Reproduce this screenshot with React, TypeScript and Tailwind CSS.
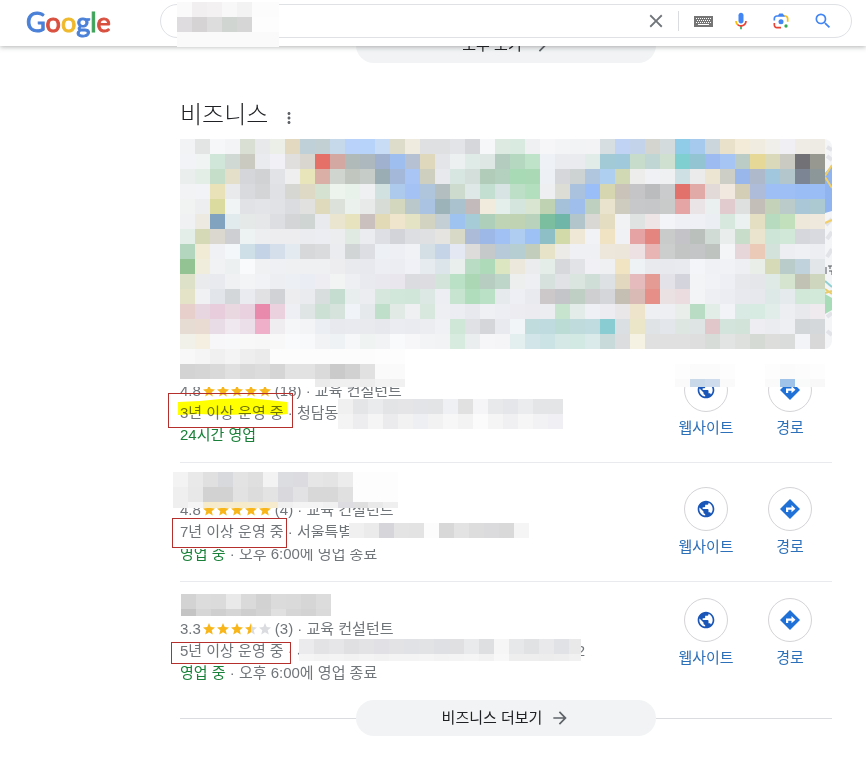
import clsx from "clsx";
import type { ReactNode } from "react";
import { MdArrowForward, MdClose, MdMoreVert, MdPublic, MdSearch } from "react-icons/md";

const CELL = 15;

// one string per row, one hex colour per cell
const mapRows = [
  "f1f3f5 e3e5e5 f5f7f9 f2f4f6 d9dfd3 e7e9eb eceee8 e2d9c0 bfd0d8 c2d0d3 c5d9ea b8d2f9 b8d3f9 c9dcf6 dddccb f0ebdf dfe0e2 dfe0e2 e3e4e8 d6d7da f6f7f9 dceae2 d9ebe0 eef0f2 f6f6f8 f3f4f6 f2f3f5 f3f3f5 d6dee1 c1d3f4 c2d3ea d3d5ce d4dbdd 90cbe8 a5caee cbd6dc e9e1ca f3ead8 f0ede0 f0efea efeff4 eeece5 edebe3",
  "f1f3f6 f0f5f4 d0e6d8 d1d9d5 cbcac1 e9ebee f0f0f6 e0dfdd d8d6cf e47068 d3a8a3 b0bab9 adb8be 9fb1ce 9fbef0 b6c2d3 dfd8bd e4e5e9 ecf0f1 dfebe6 dee7e4 b4ccbf b5d8c1 bfe3c8 eef2f6 eaebef e9ebef e1ece8 a2c9d6 a1c9dc c8dccc bfd6d5 cfdfd0 7fcfd1 92c5d1 9dbbf0 a6c5f4 bbccc6 e6d998 dadabb cac9c2 717176 979890",
  "eaeeed e3eee6 c5dec9 e3dfc8 d4d6d9 d0d2d4 e2e3e7 efeff0 e9e5ba dab0a6 d0d6cf c1c6be c6ccc8 9aadb5 a4b9da a8c5f5 cfcfbf e8e9ec d8e6e2 d4dedb b1ccb9 b4d1c0 a9dab6 a9dab5 edf1f6 d6d7da cdd3d3 b0c6df afcff1 d1d8b4 ededeb f0f1f4 eff0f2 cfe0e4 ebebec ebe5d1 cdcec6 9ab7eb aebacb a1c7de b3c6cb 7c8594 8c9799",
  "f2f3f4 f1f3f6 e9e1b7 e8eaec d8dade d3d5d7 e0e1e5 d6d6d3 ddd9c4 d5e2d2 edf3ed e8f1ea eff0f2 d0e1df adcaec a4c2f3 aec5db b3bec1 cddbce dee8e6 c3dfd1 d8e4e4 bddfc8 b3dfbf eeeff1 dcddd4 aac2dd 9abff8 d6d6b0 c9c3b9 c5c4c6 bbbcbd cacbcc e2716b e2aaa7 e2dad8 f1e9df d5ceb6 aebcda 9dbff6 9dbff6 9bbdf6 9bbdf6",
  "f0f3f1 eceef0 dcdb9f f1f4f5 e0e2e5 e3e4e7 e1e2e5 dbdce0 e1e1df dedabb dce1da ebf2ed e8eae9 d8dcd7 d3d7bd bac8cc abc3e3 9cb3ba a9c2cd c3babb f1ebdd e4eeeb d4e5de d9e4d1 bfd3b2 a5c1da a0beec bed0bf e9e3ce cecbbf c7c8c9 c6c7c8 c9caca e5a5a4 ebe4e7 eaefef e1cbce dedfdf c3beb8 c3d2b9 bacbca aac7d7 acc8d0",
  "eff1f3 edebe1 82a3bf e1ebee e5eae9 e6e7e9 dcdee1 d3d5d7 ced5d3 e8eaed eae5cf e7e3bf cac0be e2dab7 efe5cd e4e4c5 d2d3c1 c4cfd5 9fc3f0 a6cdd7 aecfb9 bed4b5 c0d4b4 b8d2bb 7abd9f 6fb6a8 b2c5ca d9d8d5 e5ddc1 f1f2f4 dfe4e2 ede5e6 f3f4f8 eff0f5 eff0f5 ebeef3 d7e8df ebf1f1 e4dec2 b6dbbe c3e0bd ede8da efe9dd",
  "e4eee8 d6d9b5 dbd8d0 cecfd2 edf2f3 eceef0 ededef ededef eaecf0 ebedf2 ebedef e0eae3 eaecf0 dddfe5 d3d4da dddee1 dfe0e2 e5e4e0 d9d9c8 abbbd8 9db8e7 a1c1f4 afcdf0 9dc0f5 8ebfc7 d3daa9 f0e8d6 f0f2f6 efe3c4 f0f1f4 e5a3a4 e58580 c9cbcb c3c3c8 bac1bc d0dbd5 e9eeed c9ddcb eae3cd cce5d7 d1e8d8 d5d7dc d9dadf",
  "b3d7be f1ebd5 eff1f4 f4f7f9 cfdfe8 c4d3e6 d5dfec e3eaf0 d6d8da d9dbdd ebecef d1d5d6 dcdee3 edf0f5 eeeff5 f0f2f6 d4dfe5 c5d5e7 e4e8f2 dedcdb c5c9ca b7cad9 b6ced2 c3cdbb e6e3c8 edebe8 eff0f4 eef0f4 ede7db ebe5da ede1e4 e8b5b4 cccdcd c3c5c4 c4c5c6 bec3c0 f4f5f7 e7d6d9 ebcab7 d3e2da eceef1 eef0f4 eceef1",
  "93c293 f0eddc f0f2f4 edf0f1 f8fafc eff1f3 eff0f3 eff0f1 eff0f2 eff0f1 ededf0 e8eaee e7e9ee eceef4 ecedf3 f0f1f6 e6ebef dbe5ea e8efec b9dcc5 afdab9 dce6c1 ece8dc ebeced e5ede8 d7d8dc e2e3e6 f0f0f5 eff0f2 f1e4c2 eff2f5 e8eaed e7e9ee e9eaef f3f5f8 f0f1f5 f0f2f5 edeff2 e9eee9 d6dab7 baccca c0d2dc e3e6e9",
  "dce1c7 eaebed e8eaef eff1f3 f2f4f6 f0f2f5 eceef2 eceff4 eaeef4 eeedf2 f2f4f4 eeeff2 e9eaef e9e8ee e9e7ed dadcdf dddde1 d3e5da bae0c5 abd7b5 b7cdc1 bed6c9 edeeee edeff2 d6e0dc e0e2e5 dae5df cfded6 dde1e3 e2d8bf e5bbbd e49b94 e2e2e8 d3d4dc f2f4f6 f0f2f5 edeff4 e6e8ec e5e6ea dfe9e5 d5e4ce c1c2b4 cfd6be",
  "e4e2c7 eff1f3 e2e5ea d4d7d9 e9ebf1 e1e0e3 d0d2d5 ededf0 e9ebee d8dedd c5dcd0 e8edee ecedf0 d6e7de d0e7d9 d0e6d9 dce8e3 eceef4 c7e4d1 b0ddbc bae0c6 e7eaec edeff5 e9eaf0 ccc7c9 c4c5c8 bfcfc4 cfcfd1 d5d6da c4beb3 dabab5 e68e88 eae1e3 ebdcdf f2f4f6 edeff3 ebedf2 e7e9ee e6e8ed dde9e6 e5eaed d1e7d8 d2e8d8",
  "e7d0cb e7d5e0 e8cedc ead8e1 ead1df e98aad ebd0de edeff4 dfe4e5 cde0d4 d6e3dc f0f3f7 e6e9ec c0dfcb e2eae6 eff0f2 d9e8df eeeff2 ecedf2 e8e9ef eff0f4 edeef3 ededf1 ececf0 ebedf1 c7e4cf e4ece9 eef0f6 ececf1 e9e7e8 eee4cc eeeff2 eeeff2 e9eeeb b9dcc5 e3ede7 f1f3f6 d9e9e4 d8ebe3 e1ede8 eceef1 e8e9ed efeaee",
  "e6dcd3 e9dad2 e8dde7 efe9ef ebdfe9 efafc8 f0edf0 f5f6f8 f3f4f6 ebeef2 e8e9ee e9eaf0 e8eaee e6e8ed eaecf1 e9ebf0 ebedf1 f0f1f4 cee7d7 dfe1e4 d5d6d9 e8eaef f2f5f7 c0dcdc c0dbdf badcd4 c0dbdc c1dce0 89cdd2 d9dfe2 ece6c8 dfe3e5 e3e6ea dde6e1 dee4e3 e1c7ca d3e4dc d2e4da ededf2 ebecef edeff2 d3d6d9 d5d8da",
  "f1f1ea f4efe1 f7f7f9 f7f8fa f8f8f9 f7f7f8 f8f8f8 f9fafc f8f9fb f1f3f5 eff2f4 f6f7f9 eff4f3 f2f3f5 f9fafc f7f7f9 f3f4f6 f2f3f5 d7ecdf ebeeee f6f6f8 f5f5f8 e3efef d2e6e9 cce3e5 d5e8e6 d2e8e3 dae9ea c8dad9 dcddde f5f2e4 e0e0e0 e0e0e0 e0e0e0 dddedd d8dcd9 e2e3e3 dde0dd d5dad4 dddedc dadbdb f3f4f8 d8d8d8",
];

const queryMosaic = [
  "fafafa f1eff0 f3f1f2 f8f8f8 f3f3f3 fcfcfc fcfcfc",
  "dedcde d6d3d5 dddddd d0d5d2 d6d6d6 fdfdfd fdfdfd",
  "fafafa fafafa fafafa fafafa fafafa fafafa fafafa",
];

type MosaicProps = { rows: string[]; className: string };

const Cells = ({ rows }: { rows: string[] }) => (
  <>
    {rows.map((row, y) =>
      row
        .split(" ")
        .map((color, x) => (
          <rect key={`${x}-${y}`} x={x * CELL} y={y * CELL} width={CELL} height={CELL} fill={`#${color}`} />
        ))
    )}
  </>
);

const Mosaic = ({ rows, className }: MosaicProps) => (
  <svg aria-hidden="true" shapeRendering="crispEdges" className={clsx("pointer-events-none absolute", className)}>
    <Cells rows={rows} />
  </svg>
);

const MapPreview = () => (
  <svg role="img" aria-label="지도" viewBox="0 0 652 210" className="block w-full rounded-r-lg" shapeRendering="crispEdges">
    <rect width="652" height="210" fill="#f4f5f7" />
    <g shapeRendering="auto" fill="none">
      <path
        d="M647 8l5 3M647 17l5 4M646 86l6-6M647 100l5-7M647 118l5-8M647 178l5-4M647 192l5 4"
        stroke="#e1e3e8"
        strokeWidth="4"
      />
      <path d="M645 34l7-8v46l-7 2z" fill="#8fb4f0" />
      <path d="M645 37l7-11M645 38l7 11M645 84l7-3" stroke="#f3cf63" strokeWidth="2" />
      <path d="M645 155l7 4v12l-7 4z" fill="#a8dcb8" />
      <path d="M645 142l7 6" stroke="#8fd0d2" strokeWidth="2" />
      <path d="M645 150l7 5M645 154l7-2" stroke="#e9cc6c" strokeWidth="2" />
      <path d="M646 128v7M648 127h4M650 127v3M649 132h3v4" stroke="#55585c" strokeWidth="1" />
    </g>
    <Cells rows={mapRows} />
  </svg>
);

const KeyboardIcon = () => (
  <svg viewBox="0 0 19 11" className="h-[11px] w-[19px]" aria-hidden="true">
    <path fill="#757575" d="M0 0h19v11H0z" />
    <path stroke="#fff" strokeDasharray="1 1" d="M2 2.5h15M3 4.5h14M2 6.5h15" />
    <path stroke="#fff" d="M4 8.5h11" />
  </svg>
);

const MicIcon = () => (
  <svg viewBox="0 0 24 24" className="size-5" aria-hidden="true">
    <path fill="#4285f4" d="M12 15c1.66 0 3-1.31 3-2.97V4.97C15 3.31 13.66 2 12 2S9 3.31 9 4.97v7.06C9 13.69 10.34 15 12 15z" />
    <path fill="#34a853" d="M11 18.08h2V22h-2z" />
    <path fill="#fbbc04" d="M7.05 16.87C5.78 15.6 5 13.9 5 12h2c0 1.38.56 2.63 1.47 3.53z" />
    <path fill="#ea4335" d="M12 16.93a4.97 4.97 0 0 1-3.54-1.46l-1.41 1.41A6.99 6.99 0 0 0 19 12h-2c0 2.76-2.24 4.93-5 4.93z" />
  </svg>
);

const LensIcon = () => (
  <svg viewBox="0 0 192 192" className="size-5" aria-hidden="true">
    <circle fill="#34a853" cx="144.07" cy="144" r="16" />
    <circle fill="#4285f4" cx="96.07" cy="104" r="24" />
    <path fill="#ea4335" d="M24 135.2c0 18.11 14.69 32.8 32.8 32.8H96v-16l-40.1-.1c-8.8 0-15.9-8.19-15.9-17.9v-18H24z" />
    <path fill="#fbbc04" d="M168 72.8c0-18.11-14.69-32.8-32.8-32.8H116l20 16c8.8 0 16 8.29 16 18v30h16z" />
    <path fill="#4285f4" d="M112 24H80L68 40H56.8C38.69 40 24 54.69 24 72.8V92h16V74c0-9.71 7.2-18 16-18h80l-24-32z" />
  </svg>
);

const DirectionsIcon = () => (
  <svg viewBox="0 0 20 20" className="size-5" aria-hidden="true">
    <path fill="#1f71d8" d="M10 0l10 10-10 10L0 10z" />
    <path fill="#fff" d="M6 13V8.6h5.5V6l4 3.7-4 3.6v-2.5H8.2V13z" />
  </svg>
);

const STAR = "M6 0l1.7 4.1 4.3.3-3.3 2.8 1.1 4.3L6 9.2l-3.8 2.3 1.1-4.3L0 4.4l4.3-.3z";

const Stars = ({ rating }: { rating: number }) => (
  <svg viewBox="0 0 70 12" className="h-3 w-[70px]" role="img" aria-label={`별점 ${rating}`}>
    <defs>
      <linearGradient id="half">
        <stop offset="50%" stopColor="#f8b61a" />
        <stop offset="50%" stopColor="#dadce0" />
      </linearGradient>
    </defs>
    {[0, 1, 2, 3, 4].map((i) => {
      const left = rating - i;
      const fill = left >= 0.75 ? "#f8b61a" : left >= 0.25 ? "url(#half)" : "#dadce0";
      return <path key={i} d={STAR} transform={`translate(${i * 14} 0)`} fill={fill} />;
    })}
  </svg>
);

const Logo = () => (
  <a href="#" aria-label="Google" className="block font-['Lato'] text-[27px] leading-8 [-webkit-text-stroke:1px]">
    <span className="text-[#4a80d8]">G</span>
    <span className="text-[#d9503f]">o</span>
    <span className="text-[#efb92c]">o</span>
    <span className="text-[#4a80d8]">g</span>
    <span className="text-[#3fa35a]">l</span>
    <span className="text-[#d9503f]">e</span>
  </a>
);

const Header = () => (
  <header className="fixed inset-x-0 top-0 z-20 flex h-[46px] items-start bg-white pt-1 pr-3.5 shadow-[0_1px_5px_rgba(32,33,36,0.35)]">
    <div className="w-40 shrink-0 pt-0.5 pl-[26px]">
      <Logo />
    </div>
    <form className="relative flex h-[34px] max-w-[692px] flex-1 items-center rounded-full border border-[#dfe1e5] pr-2">
      <input aria-label="검색" className="h-full min-w-0 flex-1 rounded-full bg-transparent pl-4 outline-none" />
      <Mosaic rows={queryMosaic} className="-top-[3px] left-4 h-[45px] w-[102px]" />
      <button type="button" aria-label="지우기" className="flex w-11 justify-center text-[#70757a]">
        <MdClose className="size-[22px]" />
      </button>
      <span className="h-5 w-px bg-[#dadce0]" />
      <button type="button" aria-label="입력 도구" className="ml-1 flex w-10 justify-center">
        <KeyboardIcon />
      </button>
      <button type="button" aria-label="음성 검색" className="flex w-9 justify-center">
        <MicIcon />
      </button>
      <button type="button" aria-label="이미지 검색" className="flex w-11 justify-center">
        <LensIcon />
      </button>
      <button type="submit" aria-label="Google 검색" className="flex w-10 justify-center text-[#4285f4]">
        <MdSearch className="size-5" />
      </button>
    </form>
  </header>
);

const MoreLink = ({ children }: { children: ReactNode }) => (
  <div className="flex items-center">
    <span className="h-px flex-1 bg-[#dadce0]" />
    <a
      href="#"
      className="flex h-9 w-[300px] items-center justify-center gap-2 rounded-full bg-[#f1f3f4] text-[15px] text-[#202124]"
    >
      {children}
      <MdArrowForward className="size-5 text-[#5f6368]" />
    </a>
    <span className="h-px flex-1 bg-[#dadce0]" />
  </div>
);

type Business = {
  rating: number;
  reviews: number;
  years: number;
  address: ReactNode;
  open: string;
  closing?: string;
  marker: string;
  highlighted?: boolean;
  mosaics: MosaicProps[];
};

const businesses: Business[] = [
  {
    rating: 4.8,
    reviews: 18,
    years: 3,
    address: "청담동",
    open: "24시간 영업",
    marker: "top-[49px] -left-3 h-[35px] w-[125px]",
    highlighted: true,
    mosaics: [
      {
        className: "top-[5px] left-0 h-[38px] w-[225px]",
        rows: [
          "f8f8f8 f5f5f5 f0f0f0 f4f4f4 eeeeee ebebeb fcfcfc fcfcfc fcfcfc fcfcfc fcfcfc fcfcfc fcfcfc fdfdfd fdfdfd",
          "d3d3d3 d5d5d5 d9d9d9 e0e0e0 d9d9d9 dcdcdc d5d5d5 e2e2e2 e2e2e2 dadada cacaca d1d1d1 e1e1e1 fafafa fafafa",
          "ffffff ffffff ffffff ffffff ffffff ffffff ffffff ffffff ffffff ebebeb f0f0f0 f0f0f0 ededed f3f3f3 f1f1f1",
        ],
      },
      {
        className: "top-[55px] left-[158px] h-[30px] w-[225px]",
        rows: [
          "f0f0f1 e4e5e6 eaebec e3e4e5 e5e5e7 e3e4e8 e3e4e5 eff0f3 e1e1e1 f5f5f7 e8e9eb e5e6e9 eaecee e3e5e7 e3e5e7",
          "f4f4f5 ededf0 f5f5f6 ebebee f2f2f3 eeeff3 f2f2f3 f7f7f8 f3f3f3 fbfbfb f5f5f5 f0f0f3 f6f6f7 f2f2f5 f0f0f4",
        ],
      },
      {
        className: "top-5 right-[97px] h-[23px] w-[60px]",
        rows: ["fdfdfd fcfbfb fcfbfb fdfdfd", "fafafa c9d9ea cfdcee fafafa"],
      },
      {
        className: "top-5 right-[7px] h-[23px] w-[60px]",
        rows: ["fdfdfd fcfbfb fcfcfc fdfdfd", "fafafa 9fc3e9 f9fafa f8f8f8"],
      },
    ],
  },
  {
    rating: 4.8,
    reviews: 4,
    years: 7,
    address: "서울특별시",
    open: "영업 중",
    closing: "오후 6:00에 영업 종료",
    marker: "top-[55px] -left-2 h-[30px] w-[115px]",
    mosaics: [
      {
        className: "top-[9px] -left-[7px] h-9 w-[225px]",
        rows: [
          "f3f3f3 e9e9e9 e0e0e0 d8d9dd e3e3e3 dfdfdf f3f3f4 dcdde1 dcdce0 e6e6e6 e4e4e4 ececec fdfdfd fdfdfd fdfdfd",
          "efefef e8e8e8 d2d2d2 d2d2d2 e2e2e2 dcdcdc e3e3e3 d9d9dd e2e2e4 d8d8d8 d8d8d8 e0e0e0 fdfdfd fdfdfd fdfdfd",
          "efefef f5f5f5 f6eccb f6ebcf f6eccb f5ebd0 f6eccd f0f0f0 f4f4f4 f4f4f4 f1f1f1 dddde1 dfdfdf e9e9e9 efefef",
        ],
      },
      {
        className: "top-[60px] left-[169px] h-[15px] w-[180px]",
        rows: ["f0f0f0 ebebeb d6d5da e4e4e5 e3e3e3 fcfcfc d8d8d8 e3e3e4 dddddd dbdbde d9d9d9 f5f5f5"],
      },
      {
        className: "top-[75px] left-0 h-[11px] w-[195px]",
        rows: ["ffffff ffffff ffffff ffffff ffffff ffffff ffffff ffffff ffffff ffffff ffffff ffffff ffffff"],
      },
    ],
  },
  {
    rating: 3.3,
    reviews: 3,
    years: 5,
    address: (
      <span className="inline-flex w-[288px] justify-between">
        <span>서</span>
        <span>2</span>
      </span>
    ),
    open: "영업 중",
    closing: "오후 6:00에 영업 종료",
    marker: "top-[60px] -left-[9px] h-[22px] w-[120px]",
    mosaics: [
      {
        className: "top-3 left-px h-[22px] w-[150px]",
        rows: [
          "d3d3d3 dcdcdc dbdbdb e9e9e9 dadada d2d2d2 dbdbdb dadada d6d6d6 dcdcdc",
          "c4c4c4 d6d6d6 cfcfcf d5d5d5 cecece d3d3d3 e0e0e0 d6d6d6 d3d3d3 dadada",
        ],
      },
      {
        className: "top-[57px] left-[119px] h-[22px] w-[282px]",
        rows: [
          "ebebee e3e3e6 e6e6e8 e0e0e3 e3e3e6 e0e0e5 e3e3e5 e0e2e5 e2e3e4 dfe0e3 e0e0e2 e9eaec dddfe0 f6f6f6 e7e8ea e0e2e4 e9e9eb e0e2e5 e9e9ea",
          "f5f5f6 f3f3f3 f4f4f4 f2f2f2 f4f4f4 f2f2f2 f4f4f4 f4f4f4 f5f5f5 f3f3f3 f4f4f4 f5f5f5 f2f2f2 f8f8f8 eeeeee eeeeee ededed eeeeee f1f1f1",
        ],
      },
    ],
  },
];

const ActionLink = ({ label, children }: { label: string; children: ReactNode }) => (
  <a href="#" className="flex w-[84px] flex-col items-center gap-1.5 text-[15px] leading-5 text-[#2b70b9]">
    <span className="flex size-11 items-center justify-center rounded-full border border-[#d5d3d7]">{children}</span>
    {label}
  </a>
);

const BusinessItem = ({ business }: { business: Business }) => (
  <li className="group relative flex border-b border-[#e8eaed] last:border-b-0">
    <div className="min-w-0 flex-1 pt-3 pb-4 text-[15px] leading-[22px] whitespace-nowrap text-[#70757a] group-last:pb-0">
      <div className="h-6" />
      <p className="flex items-center">
        {business.rating}
        <span className="mx-0.5">
          <Stars rating={business.rating} />
        </span>
        ({business.reviews}) · 교육 컨설턴트
      </p>
      <p>
        {business.years}년 이상 운영 중 · {business.address}
      </p>
      <p>
        <span className="text-[#188038]">{business.open}</span>
        {business.closing && ` · ${business.closing}`}
      </p>
    </div>

    <div className="flex items-center">
      <ActionLink label="웹사이트">
        <MdPublic className="size-5 text-[#1a56b8]" />
      </ActionLink>
      <ActionLink label="경로">
        <DirectionsIcon />
      </ActionLink>
    </div>

    {business.mosaics.map((mosaic) => (
      <Mosaic key={mosaic.className} {...mosaic} />
    ))}
    {business.highlighted && (
      <svg viewBox="0 0 112 20" className="absolute top-[54px] -left-0.5 h-5 w-28 mix-blend-multiply" aria-hidden="true">
        <path d="M0 4l22-1 20-2 30-1 18 2 19 2 1 12-12 1-20-1-30 1-28-1-20 1z" fill="#ffff00" />
      </svg>
    )}
    <span className={clsx("absolute border border-[#b5302c]", business.marker)} />
  </li>
);

export default function App() {
  return (
    <div className="min-h-screen bg-white font-['Liberation_Sans','Noto_Sans_CJK_KR',sans-serif]">
      <Header />
      <main className="mr-[34px] ml-[180px] max-w-[652px] pt-[27px] pb-7">
        <MoreLink>모두 보기</MoreLink>

        <section className="pt-9">
          <div className="flex h-8 items-center gap-3">
            <h2 className="text-2xl leading-8 font-light text-[#202124]">비즈니스</h2>
            <button type="button" aria-label="이 결과에 대한 정보" className="pt-1.5 text-[#5f6368]">
              <MdMoreVert className="size-[18px]" />
            </button>
          </div>
          <div className="mt-2">
            <MapPreview />
          </div>

          <ul className="relative -mt-[5px] mb-4">
            {businesses.map((business) => (
              <BusinessItem key={business.years} business={business} />
            ))}
          </ul>

          <MoreLink>비즈니스 더보기</MoreLink>
        </section>
      </main>
    </div>
  );
}
